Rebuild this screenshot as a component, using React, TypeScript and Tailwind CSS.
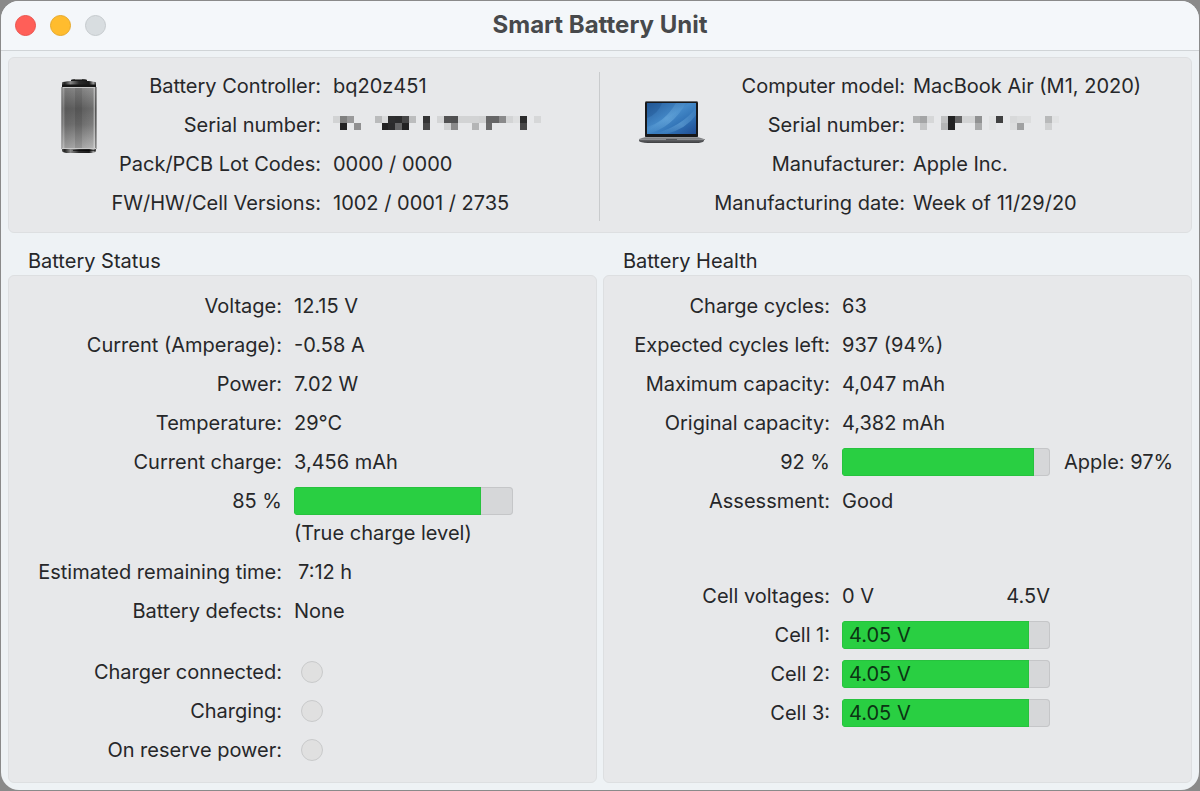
import type { ReactNode } from "react";
import clsx from "clsx";

const GREEN_BARS = { charge: 85.4, capacity: 92.5 };
const MAX_CELL_VOLTAGE = 4.5;

const CELLS = [
  { name: "Cell 1:", voltage: 4.05 },
  { name: "Cell 2:", voltage: 4.05 },
  { name: "Cell 3:", voltage: 4.05 },
];

// [column, row, shade] blocks of the masked serial numbers
type Block = [number, number, string];

const BATTERY_SERIAL: Block[] = [
  [0, 0, "#d2d3d4"], [1, 0, "#808080"], [2, 0, "#9a9a9b"], [6, 0, "#babbbc"],
  [7, 0, "#dadbdc"], [8, 0, "#2e2e2f"], [9, 0, "#2c2c2d"], [10, 0, "#464647"],
  [11, 0, "#bcbdbe"], [13, 0, "#343435"], [15, 0, "#d4d5d6"], [16, 0, "#525253"],
  [17, 0, "#505051"], [18, 0, "#d2d3d4"], [19, 0, "#d2d3d4"], [20, 0, "#d2d3d4"],
  [21, 0, "#d0d1d2"], [22, 0, "#666667"], [23, 0, "#666667"], [24, 0, "#8a8a8b"],
  [25, 0, "#d3d4d5"], [26, 0, "#dedfe0"], [27, 0, "#2b2b2c"], [29, 0, "#d6d7d8"],
  [1, 1, "#222223"], [3, 1, "#909091"], [7, 1, "#222223"], [8, 1, "#2b2b2c"],
  [9, 1, "#666667"], [10, 1, "#222223"], [13, 1, "#484849"], [16, 1, "#d0d1d2"],
  [17, 1, "#8a8a8b"], [20, 1, "#b4b5b6"], [22, 1, "#6b6b6c"], [27, 1, "#464647"],
];

const COMPUTER_SERIAL: Block[] = [
  [0, 0, "#b0b1b2"], [1, 0, "#a4a5a6"], [2, 0, "#d6d7d8"], [4, 0, "#c0c1c2"],
  [5, 0, "#222223"], [6, 0, "#666667"], [7, 0, "#d3d4d5"], [8, 0, "#d3d4d5"],
  [9, 0, "#909192"], [11, 0, "#e1e2e3"], [12, 0, "#404041"], [14, 0, "#d8d9da"],
  [15, 0, "#dcddde"], [16, 0, "#dcddde"], [19, 0, "#b8b9ba"], [20, 0, "#e1e2e3"],
  [1, 1, "#c4c5c6"], [4, 1, "#b4b5b6"], [5, 1, "#222223"], [9, 1, "#aaabac"],
  [11, 1, "#e2e3e4"], [14, 1, "#dcddde"], [15, 1, "#a0a1a2"], [19, 1, "#d0d1d2"],
];

function MaskedSerial({ blocks }: { blocks: Block[] }) {
  return (
    <svg
      width="208"
      height="14"
      viewBox="0 0 210 14"
      preserveAspectRatio="none"
      role="img"
      aria-label="Hidden"
      shapeRendering="crispEdges"
    >
      {blocks.map(([col, row, shade]) => (
        <rect key={`${col}-${row}`} x={col * 7} y={row * 7} width="7" height="7" fill={shade} />
      ))}
    </svg>
  );
}

function BatteryIcon() {
  return (
    <svg width="36" height="76" viewBox="0 0 36 76" className="shrink-0" aria-hidden="true">
      <defs>
        <linearGradient id="body" x1="0" y1="0" x2="0" y2="1">
          <stop offset="0" stopColor="#8e8e8e" />
          <stop offset="0.35" stopColor="#646464" />
          <stop offset="0.6" stopColor="#757575" />
          <stop offset="1" stopColor="#b2b2b2" />
        </linearGradient>
        <linearGradient id="shine" x1="0" y1="0" x2="1" y2="0">
          <stop offset="0" stopColor="#000" stopOpacity="0.3" />
          <stop offset="0.05" stopColor="#fff" stopOpacity="0.2" />
          <stop offset="0.12" stopColor="#000" stopOpacity="0.12" />
          <stop offset="0.38" stopColor="#000" stopOpacity="0.05" />
          <stop offset="0.4" stopColor="#000" stopOpacity="0.16" />
          <stop offset="0.58" stopColor="#000" stopOpacity="0.14" />
          <stop offset="0.6" stopColor="#000" stopOpacity="0.05" />
          <stop offset="0.9" stopColor="#fff" stopOpacity="0.05" />
          <stop offset="0.94" stopColor="#fff" stopOpacity="0.5" />
          <stop offset="0.98" stopColor="#000" stopOpacity="0.3" />
          <stop offset="1" stopColor="#000" stopOpacity="0.35" />
        </linearGradient>
        <linearGradient id="cap" x1="0" y1="0" x2="1" y2="0">
          <stop offset="0" stopColor="#555" />
          <stop offset="0.08" stopColor="#222" />
          <stop offset="0.25" stopColor="#888" />
          <stop offset="0.5" stopColor="#2a2a2a" />
          <stop offset="0.8" stopColor="#1a1a1a" />
          <stop offset="0.92" stopColor="#999" />
          <stop offset="1" stopColor="#333" />
        </linearGradient>
      </defs>
      <path d="M10 4V2Q11 1 18 1T26 2V4Z" fill="#1a1a1a" />
      <path d="M14 1.5h7" stroke="#777" />
      <path d="M1 4.5Q2 3.500 10 3H27Q34 3.500 35 4.500V9H1Z" fill="url(#cap)" />
      <path d="M1 6.500H35V9H1Z" fill="#161616" />
      <rect x="0.500" y="9" width="35" height="62" fill="url(#body)" />
      <rect x="0.500" y="9" width="35" height="62" fill="url(#shine)" />
      <path d="M2 9.500H34" stroke="#c8c8c8" />
      <path d="M1 71H35V73Q34 75 28 75H8Q2 75 1 73Z" fill="url(#cap)" />
      <path d="M1 70.500H35" stroke="#c8c8c8" />
      <path d="M12 72.500H34" stroke="#000" opacity="0.6" />
    </svg>
  );
}

function LaptopIcon() {
  return (
    <svg width="68" height="44" viewBox="0 0 68 44" className="shrink-0" aria-hidden="true">
      <defs>
        <linearGradient id="sky" x1="0" y1="0" x2="1" y2="1">
          <stop offset="0" stopColor="#275d9c" />
          <stop offset="0.45" stopColor="#4489c8" />
          <stop offset="0.7" stopColor="#2f70b4" />
          <stop offset="1" stopColor="#204c92" />
        </linearGradient>
        <linearGradient id="base" x1="0" y1="0" x2="0" y2="1">
          <stop offset="0" stopColor="#a0a1a4" />
          <stop offset="0.5" stopColor="#626366" />
          <stop offset="1" stopColor="#3c3d40" />
        </linearGradient>
        <linearGradient id="ray" x1="0" y1="1" x2="1" y2="0">
          <stop offset="0" stopColor="#8cc8f0" stopOpacity="0" />
          <stop offset="0.5" stopColor="#8cc8f0" stopOpacity="0.35" />
          <stop offset="1" stopColor="#8cc8f0" stopOpacity="0.05" />
        </linearGradient>
      </defs>
      <rect x="7" y="1" width="53" height="37" rx="2" fill="#17181b" />
      <path d="M8 1.500H59" stroke="#66686b" />
      <rect x="9" y="3" width="49" height="31" fill="url(#sky)" />
      <path d="M9 27Q27 22 38 3H48Q34 28 9 34Z" fill="url(#ray)" />
      <path d="M16 34Q44 26 58 8V15Q48 29 28 34Z" fill="url(#ray)" />
      <path d="M9 3H24Q20 14 9 18Z" fill="#14427e" opacity="0.25" />
      <path d="M7 37H60L66 39V41Q64 43 58 43H10Q2 42.500 1 41V39Z" fill="url(#base)" />
      <path d="M1 39.500H67" stroke="#8d8e91" />
      <path d="M28 39.500H39" stroke="#56575a" />
    </svg>
  );
}

function Panel({ children, className }: { children: ReactNode; className?: string }) {
  return (
    <div className={clsx("rounded-md border border-[#dddfe1] bg-[#e7e8ea]", className)}>{children}</div>
  );
}

function Row({ label, children, className }: { label: string; children?: ReactNode; className?: string }) {
  return (
    <>
      <dt className={clsx("text-right whitespace-nowrap", className)}>{label}</dt>
      <dd className={clsx("whitespace-nowrap", className)}>{children}</dd>
    </>
  );
}

interface BarProps {
  label: string;
  percent: number;
  width: string;
  text?: string;
}

function Bar({ label, percent, width, text }: BarProps) {
  return (
    <div
      role="meter"
      aria-label={label}
      aria-valuemin={0}
      aria-valuemax={100}
      aria-valuenow={percent}
      className={clsx("h-7 overflow-hidden rounded-sm bg-[#d6d7d9] inset-ring inset-ring-[#c5c6c8]", width)}
    >
      <div
        className="h-full bg-[#29cf42] pl-[7px] text-[#0b3413] inset-ring inset-ring-[#27c23e]"
        style={{ width: `${percent}%` }}
      >
        {text}
      </div>
    </div>
  );
}

function Light({ label }: { label: string }) {
  return (
    <span
      role="img"
      aria-label={label}
      className="mt-[3px] ml-[7px] block size-[22px] rounded-full border border-[#c9cacb] bg-[#e0e0e0]"
    />
  );
}

export default function App() {
  return (
    <div className="flex min-h-screen flex-col bg-[#8a8a8a] p-px font-['Inter',sans-serif] text-[20px] leading-7 text-[#262729]">
      <div className="flex grow flex-col overflow-hidden rounded-[18px] bg-[#eef2f5]">
        <header className="grid h-[50px] grid-cols-[1fr_auto_1fr] items-center border-b border-[#d0d4d7] bg-[#f4f7fa]">
          <div className="flex gap-3.5 pl-3.5">
            <button aria-label="Close" className="size-[21px] rounded-full border border-[#e9534d] bg-[#ff5f58]" />
            <button aria-label="Minimize" className="size-[21px] rounded-full border border-[#e5a82b] bg-[#ffbc2e]" />
            <button aria-label="Zoom" disabled className="size-[21px] rounded-full border border-[#c5cacd] bg-[#d8dde0]" />
          </div>
          <h1 className="pb-0.5 text-[24px] font-bold text-[#47494b]">Smart Battery Unit</h1>
        </header>

        <main className="flex grow flex-col px-[7px] pt-1.5 pb-[7px]">
          <Panel className="grid grid-cols-2 pt-3.5 pb-[11px]">
            <div className="flex border-r border-[#c9cbcd] pb-1 pl-[52px]">
              <div className="pt-1.5">
                <BatteryIcon />
              </div>
              <dl className="grid grid-cols-[224px_auto] gap-x-3 gap-y-[11px]">
                <Row label="Battery Controller:">bq20z451</Row>
                <Row label="Serial number:">
                  <div className="pt-[5px]">
                    <MaskedSerial blocks={BATTERY_SERIAL} />
                  </div>
                </Row>
                <Row label="Pack/PCB Lot Codes:">0000 / 0000</Row>
                <Row label="FW/HW/Cell Versions:">1002 / 0001 / 2735</Row>
              </dl>
            </div>
            <div className="flex pb-1 pl-[38px]">
              <div className="pt-7">
                <LaptopIcon />
              </div>
              <dl className="grid grid-cols-[199px_auto] gap-x-2 gap-y-[11px]">
                <Row label="Computer model:">MacBook Air (M1, 2020)</Row>
                <Row label="Serial number:">
                  <div className="pt-[5px]">
                    <MaskedSerial blocks={COMPUTER_SERIAL} />
                  </div>
                </Row>
                <Row label="Manufacturer:">Apple Inc.</Row>
                <Row label="Manufacturing date:">Week of 11/29/20</Row>
              </dl>
            </div>
          </Panel>

          <div className="grid grow grid-cols-2 gap-1.5 pt-4">
            <section className="flex flex-col">
              <h2 className="pb-0.5 pl-5 leading-6">Battery Status</h2>
              <Panel className="grow py-4">
                <dl className="grid grid-cols-[273px_1fr] gap-x-3 gap-y-[11px]">
                  <Row label="Voltage:">12.15 V</Row>
                  <Row label="Current (Amperage):">-0.58 A</Row>
                  <Row label="Power:">7.02 W</Row>
                  <Row label="Temperature:">29°C</Row>
                  <Row label="Current charge:">3,456 mAh</Row>
                  <Row label="85 %">
                    <Bar label="Charge level" percent={GREEN_BARS.charge} width="w-[219px]" />
                    <p className="pt-1">(True charge level)</p>
                  </Row>
                  <Row label="Estimated remaining time:">
                    <span className="pl-1">7:12 h</span>
                  </Row>
                  <Row label="Battery defects:">None</Row>
                  <Row label="Charger connected:" className="mt-[22px]">
                    <Light label="Charger not connected" />
                  </Row>
                  <Row label="Charging:">
                    <Light label="Not charging" />
                  </Row>
                  <Row label="On reserve power:">
                    <Light label="Not on reserve power" />
                  </Row>
                </dl>
              </Panel>
            </section>

            <section className="flex flex-col">
              <h2 className="pb-0.5 pl-5 leading-6">Battery Health</h2>
              <Panel className="grow py-4">
                <dl className="grid grid-cols-[226px_1fr] gap-x-3 gap-y-[11px]">
                  <Row label="Charge cycles:">63</Row>
                  <Row label="Expected cycles left:">937 (94%)</Row>
                  <Row label="Maximum capacity:">4,047 mAh</Row>
                  <Row label="Original capacity:">4,382 mAh</Row>
                  <Row label="92 %">
                    <div className="flex gap-3.5">
                      <Bar label="Capacity left" percent={GREEN_BARS.capacity} width="w-[208px]" />
                      <span>Apple: 97%</span>
                    </div>
                  </Row>
                  <Row label="Assessment:">Good</Row>
                  <Row label="Cell voltages:" className="mt-14">
                    <div className="flex w-[208px] justify-between">
                      <span>0 V</span>
                      <span>4.5V</span>
                    </div>
                  </Row>
                  {CELLS.map(({ name, voltage }) => (
                    <Row key={name} label={name}>
                      <Bar
                        label={name}
                        percent={(voltage / MAX_CELL_VOLTAGE) * 100}
                        width="w-[208px]"
                        text={`${voltage} V`}
                      />
                    </Row>
                  ))}
                </dl>
              </Panel>
            </section>
          </div>
        </main>
      </div>
    </div>
  );
}
